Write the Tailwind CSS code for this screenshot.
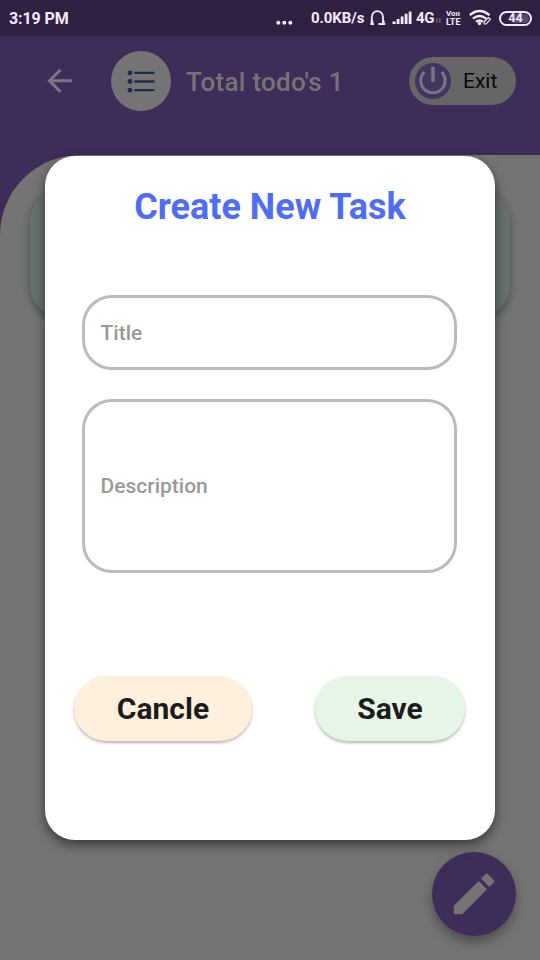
<!DOCTYPE html>
<html lang="en">
<head>
<meta charset="utf-8">
<title>Create New Task</title>
<script src="https://cdn.jsdelivr.net/npm/@tailwindcss/browser@4"></script>
</head>
<body class="font-[Roboto,sans-serif]">
<div class="relative flex h-[960px] w-[540px] flex-col overflow-hidden bg-[#3e2c59]">
  <!-- status bar -->
  <div class="flex h-9 shrink-0 items-center bg-[#2f2041] pl-[9px] pr-2 text-[#f3eaff]">
    <span class="w-[266px] pt-px text-[16px] leading-9 font-bold tracking-[-0.1px]">3:19 PM</span>
    <svg class="h-9 w-[36px] shrink-0" viewBox="0 0 36 36" fill="currentColor"><circle cx="3.3" cy="22.7" r="2"/><circle cx="9.3" cy="22.7" r="2"/><circle cx="15.3" cy="22.7" r="2"/></svg>
    <span class="w-[57px] whitespace-nowrap text-[15px] leading-9 font-bold tracking-[-0.1px]">0.0KB/s</span>
    <svg class="h-9 w-6 shrink-0" viewBox="368 0 24 36" fill="none" stroke="currentColor" stroke-width="1.8"><path d="M374 24h-3.500M371.800 24v-7a5.600 5.800 0 0 1 11.200 0v7h2.300M383 24h-4.500"/><path d="M372 20.500v4M383.300 20.500v4" stroke-width="2.500"/></svg>
    <svg class="h-9 w-6 shrink-0" viewBox="392 0 24 36" fill="currentColor"><path d="M392.500 24v-2.500h3.200v2.500zM396.700 24v-5h2.800v5zM400.700 24v-7.500h2.800v7.500zM404.700 24v-10.200h2.800v10.200zM408.700 24v-12.500h2.800v12.500z"/></svg>
    <span class="w-[19px] text-[15px] leading-9 font-bold tracking-[-0.4px]">4G</span>
    <svg class="h-9 w-[10px] shrink-0" viewBox="435 0 10 36" stroke="#7c6d90" stroke-width="1.200" fill="none"><path d="M437 18v5M439.800 18v5"/></svg>
    <span class="flex w-[24px] flex-col pl-px text-[9px] leading-none font-bold"><span class="h-[9px] text-[8px] leading-[9px]">Voıı</span><span class="h-[9px] leading-[9px]">LTE</span></span>
    <svg class="h-9 w-[30px] shrink-0" viewBox="469 0 30 36" fill="none" stroke="currentColor" stroke-width="2.400"><path d="M469.700 15.200q9.900-8.200 19.800 0M472.900 18.600q6.600-5.400 13.200 0M476 21.900q3.600-2.800 7 0"/><circle cx="479.500" cy="23.500" r="1.700" fill="currentColor" stroke="none"/><path d="M484 22l4.300-4.500 2.200 1.700-4.300 4.800h-2z" fill="#2f2041" stroke-width="1.200"/></svg>
    <span class="relative flex h-[15px] w-[33px] shrink-0 items-center justify-center rounded-full border-2 border-[#f3eaff] text-[12.500px] leading-none font-bold"><span class="absolute inset-y-px right-px left-[12px] rounded-r-full bg-[#75688a]/60"></span><span class="relative">44</span></span>
  </div>

  <!-- app bar -->
  <div class="flex h-[119px] shrink-0 items-start pt-[15px]">
    <svg class="mt-[14px] ml-[44px] h-8 w-8 shrink-0" viewBox="0 0 32 32" fill="none" stroke="#7a7680" stroke-width="3"><path d="M5.500 15.700H28M16.500 4.700L5.500 15.700l11 11"/></svg>
    <div class="ml-[35px] flex size-[60px] shrink-0 items-center justify-center rounded-full bg-[#747474]">
      <svg class="h-[23px] w-[28px]" viewBox="0 0 28 24" fill="#202a4c"><circle cx="2.500" cy="3" r="2.500"/><circle cx="2.500" cy="12" r="2.500"/><circle cx="2.500" cy="21" r="2.500"/><path d="M7 1.700h21v2.600H7zM7 10.700h21v2.600H7zM7 19.700h21v2.600H7z"/></svg>
    </div>
    <h1 class="ml-[15px] w-[223px] text-[26px] leading-[62px] font-medium tracking-[0.3px] whitespace-nowrap text-[#747474]">Total todo's 1</h1>
    <div class="mt-[6px] flex h-12 w-[107px] shrink-0 items-center rounded-full bg-[#666666] pl-[6px]">
      <svg class="size-9 shrink-0" viewBox="0 0 36 36" fill="none"><circle cx="18" cy="18" r="18" fill="#443460"/><path d="M9.300 9A12.200 12.200 0 1 0 26.700 9" stroke="#7a7481" stroke-width="3"/><path d="M18 3.700v15.300" stroke="#7a7481" stroke-width="3.500"/></svg>
      <span class="ml-3 text-[21px] leading-none text-[#080808]">Exit</span>
    </div>
  </div>

  <!-- task list -->
  <div class="relative flex-1 rounded-tl-[80px] bg-[#747474] px-[30px] pt-[35px]">
    <div class="h-[126px] rounded-[30px] bg-[#68716c] shadow-[0_3px_8px_rgba(0,0,0,.35)]"></div>
    <div class="absolute right-6 bottom-6 flex size-[84px] items-center justify-center rounded-full bg-[#3e2c59] shadow-[0_6px_12px_rgba(0,0,0,.35)]">
      <svg class="size-[54px]" viewBox="0 0 24 24" fill="#747474"><path d="M3 17.460v3.040c0 .28.220.5.500.5h3.040c.13 0 .26-.05.350-.15L17.810 9.940l-3.750-3.750L3.150 17.100c-.1.1-.15.220-.15.360zM20.710 7.040a1 1 0 0 0 0-1.410l-2.340-2.340a1 1 0 0 0-1.410 0l-1.830 1.830 3.750 3.750z"/></svg>
    </div>
  </div>

  <!-- dialog -->
  <div class="absolute top-[156px] left-[45px] flex h-[684px] w-[450px] flex-col rounded-[30px] bg-white shadow-[0_5px_12px_rgba(0,0,0,.5)]">
    <h2 class="mt-[29px] text-center text-[36px] leading-[44px] font-bold text-[#4e6cf5]">Create New Task</h2>
    <div class="mr-[38px] ml-[37px] mt-[66px] flex h-[75px] items-center rounded-[30px] border-3 border-[#bbbbbb] pt-[2px] pl-[15.500px] text-[21px] font-medium text-[#999999]">Title</div>
    <div class="mr-[38px] ml-[37px] mt-[29px] flex h-[174px] items-center rounded-[30px] border-3 border-[#bbbbbb] pt-[2px] pl-[15.500px] text-[21px] font-medium text-[#999999]">Description</div>
    <div class="mr-[30px] ml-[29px] mt-[103px] flex justify-between">
      <button class="h-[65px] w-[178px] rounded-full bg-[#fff0de] text-[30px] font-bold text-[#1c1c1c] shadow-[0_2px_3px_rgba(0,0,0,.28)]">Cancle</button>
      <button class="h-[65px] w-[150px] rounded-full bg-[#e6f5e8] text-[30px] font-bold text-[#1c1c1c] shadow-[0_2px_3px_rgba(0,0,0,.28)]">Save</button>
    </div>
  </div>
</div>
</body>
</html>
